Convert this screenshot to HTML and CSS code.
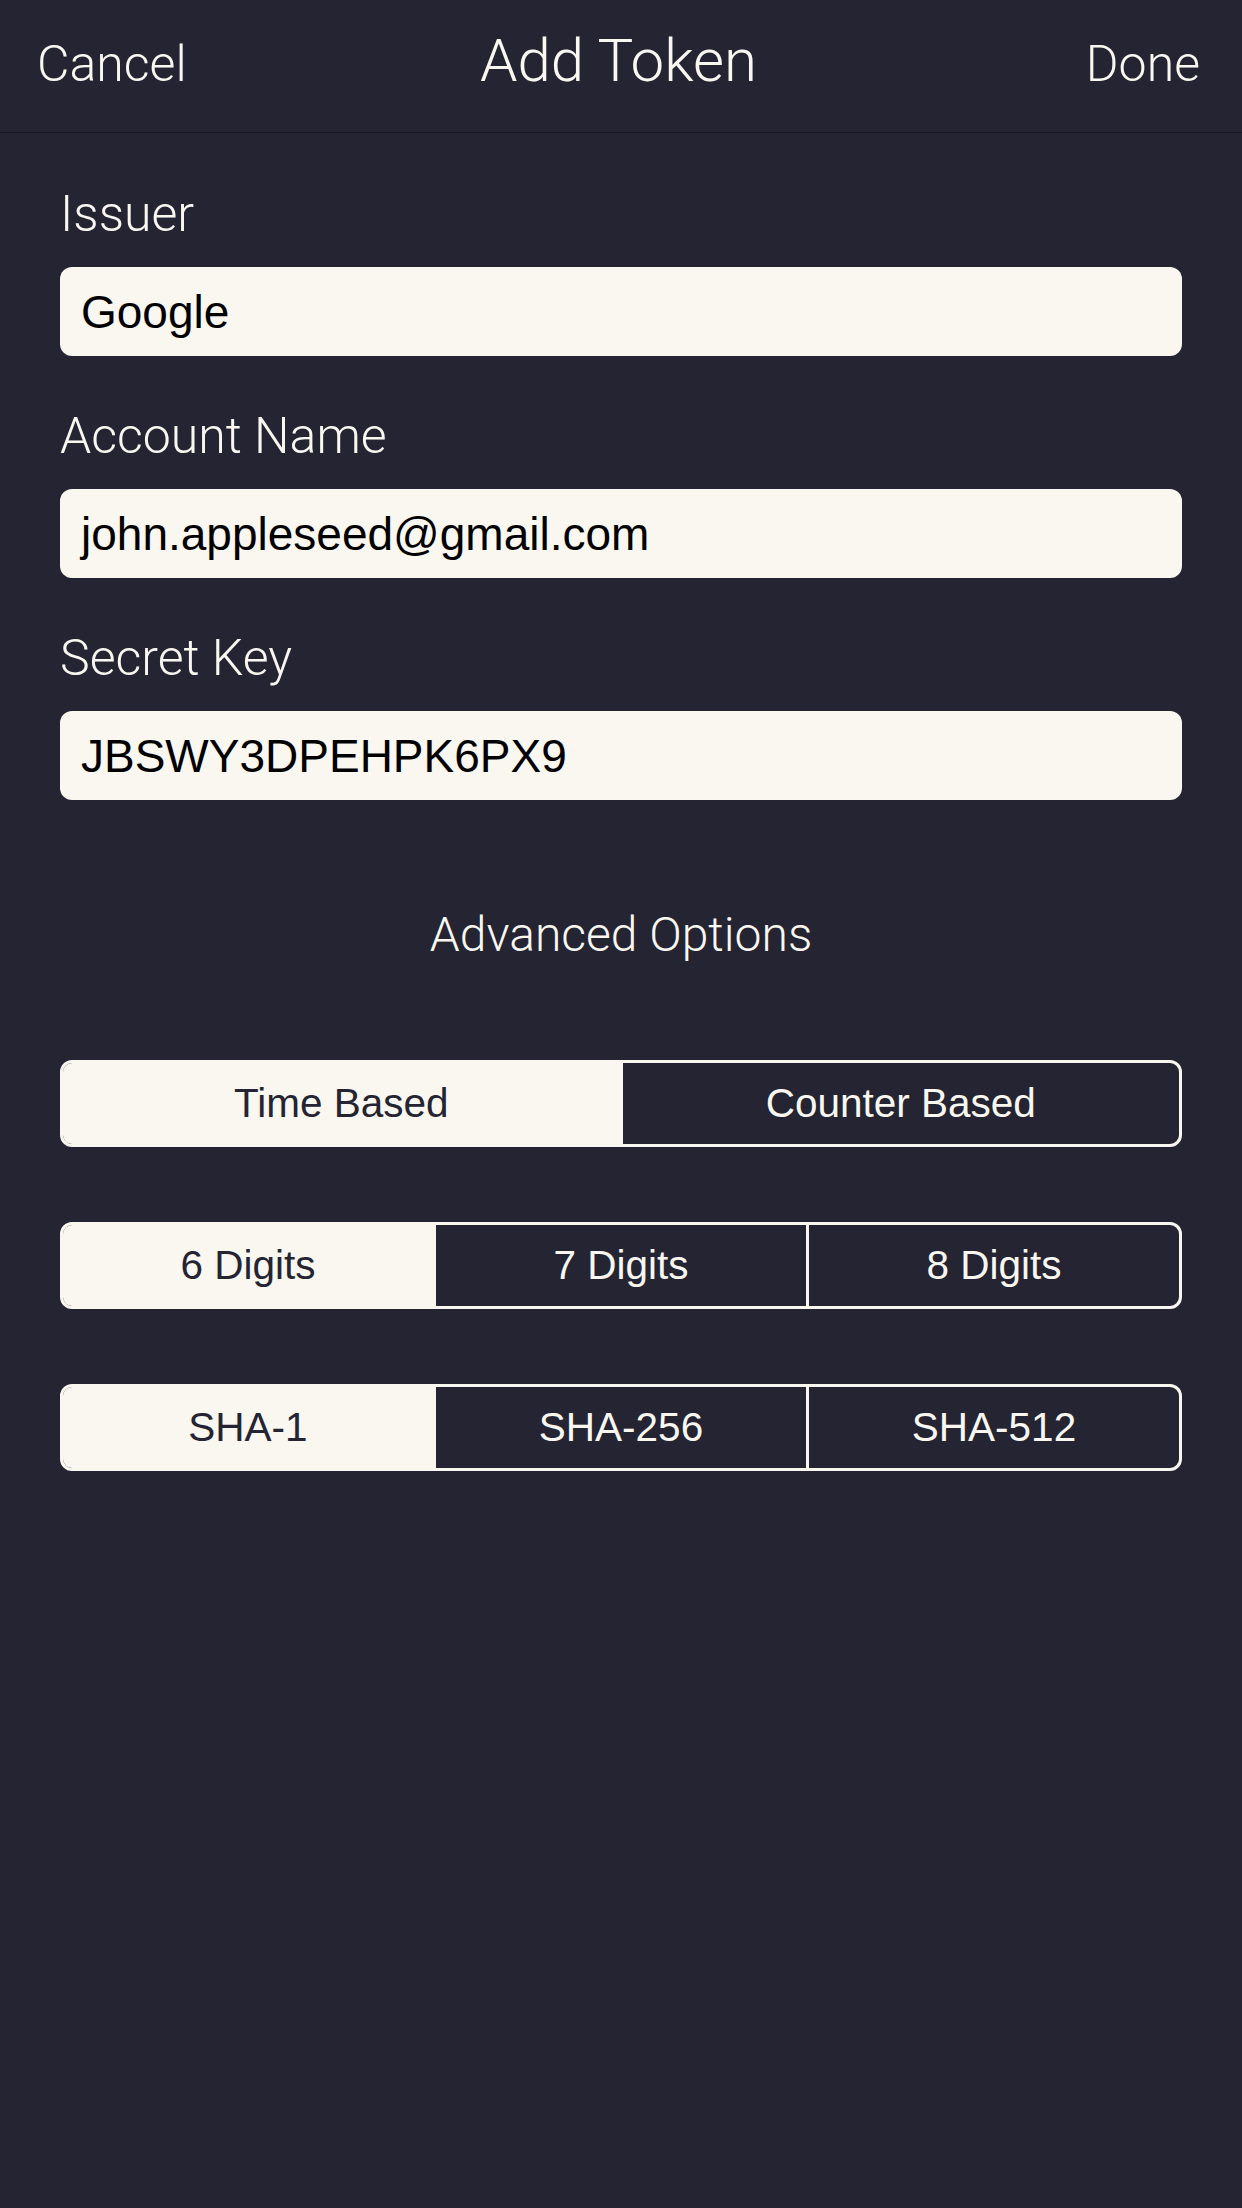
FILE: index.html
```html
<!DOCTYPE html>
<html>
<head>
<meta charset="utf-8">
<link rel="stylesheet" href="styles.css">
</head>
<body>
<div class="screen">
  <header class="nav">
    <span class="nav-btn nav-left">Cancel</span>
    <span class="nav-title">Add Token</span>
    <span class="nav-btn nav-right">Done</span>
  </header>
  <main class="form">
    <div class="group">
      <div class="label">Issuer</div>
      <div class="field">Google</div>
    </div>
    <div class="group">
      <div class="label">Account Name</div>
      <div class="field">john.appleseed@gmail.com</div>
    </div>
    <div class="group">
      <div class="label">Secret Key</div>
      <div class="field">JBSWY3DPEHPK6PX9</div>
    </div>
    <div class="section-title">Advanced Options</div>
    <div class="segments">
      <div class="seg">
        <div class="seg-item active">Time Based</div>
        <div class="seg-item">Counter Based</div>
      </div>
      <div class="seg">
        <div class="seg-item active">6 Digits</div>
        <div class="seg-item">7 Digits</div>
        <div class="seg-item">8 Digits</div>
      </div>
      <div class="seg">
        <div class="seg-item active">SHA-1</div>
        <div class="seg-item">SHA-256</div>
        <div class="seg-item">SHA-512</div>
      </div>
    </div>
  </main>
</div>
</body>
</html>
```
FILE: styles.css
```css
html, body {
  margin: 0;
  padding: 0;
  background: #242432;
}
.screen {
  width: 1242px;
  height: 2208px;
  background: #242432;
  color: #f9f7f0;
  font-family: "Roboto", "Liberation Sans", sans-serif;
  overflow: hidden;
}
.nav {
  height: 132px;
  border-bottom: 1px solid #1b1b26;
  display: grid;
  grid-template-columns: 1fr auto 1fr;
  align-items: center;
  padding: 0 42px 0 37px;
}
.nav-btn {
  font-size: 50px;
  font-weight: 300;
  line-height: 60px;
  margin-top: -4px;
}
.nav-left {
  justify-self: start;
}
.nav-right {
  justify-self: end;
}
.nav-title {
  font-size: 60px;
  font-weight: 300;
  line-height: 60px;
  margin-top: -10px;
}
.form {
  padding: 51px 60px 0;
}
.group {
  margin-bottom: 50px;
}
.label {
  font-size: 50px;
  font-weight: 300;
  line-height: 60px;
  height: 60px;
  margin-bottom: 23px;
}
.field {
  height: 89px;
  border-radius: 12px;
  background: #f9f7f0;
  color: #000;
  display: flex;
  align-items: center;
  padding-left: 21px;
  font-family: "Liberation Sans", sans-serif;
  font-size: 46px;
}
.section-title {
  margin-top: 105px;
  text-align: center;
  font-size: 48px;
  font-weight: 300;
  line-height: 60px;
}
.segments {
  margin-top: 95px;
  display: flex;
  flex-direction: column;
  gap: 75px;
}
.seg {
  height: 87px;
  box-sizing: border-box;
  border: 3px solid #f9f7f0;
  border-radius: 12px;
  display: flex;
  overflow: hidden;
}
.seg-item {
  flex: 1;
  display: flex;
  align-items: center;
  justify-content: center;
  font-family: "Liberation Sans", sans-serif;
  font-size: 40.5px;
  color: #f9f7f0;
  border-left: 3px solid #f9f7f0;
}
.seg-item:first-child {
  border-left: none;
}
.seg-item.active {
  background: #f9f7f0;
  color: #242432;
}
```
